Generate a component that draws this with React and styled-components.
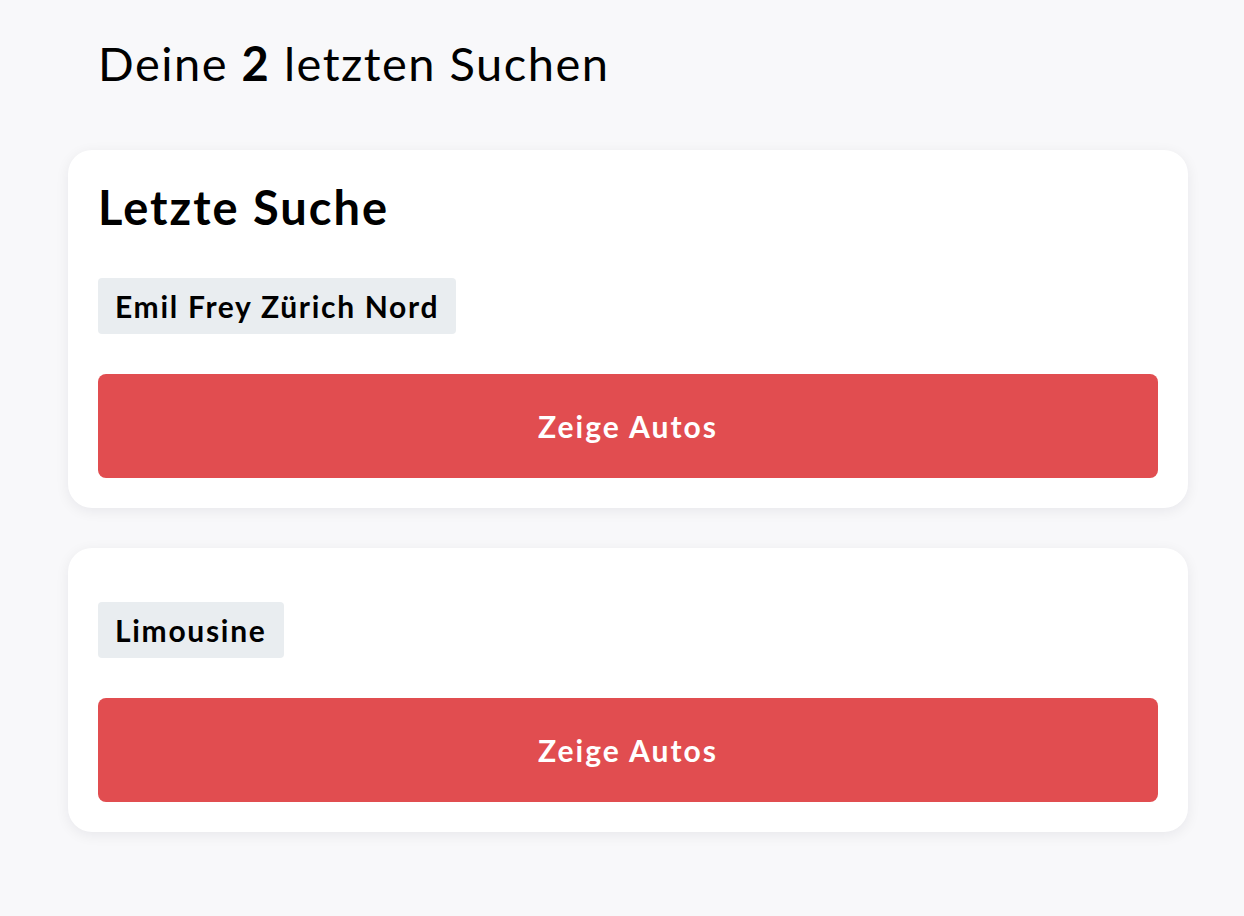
import React from "react";
import styled, { createGlobalStyle } from "styled-components";

const Global = createGlobalStyle`
  html, body {
    margin: 0;
    padding: 0;
    background: #f8f8fa;
    font-family: Lato, "Noto Sans", sans-serif;
    color: #000;
  }
`;

const Page = styled.main`
  padding: 34px 56px 40px 68px;
`;

const Heading = styled.h1`
  margin: 0 0 58px 30px;
  font-size: 47px;
  line-height: 58px;
  font-weight: 400;
  letter-spacing: 1.5px;
  b { font-weight: 700; }
`;

const List = styled.div`
  display: flex;
  flex-direction: column;
  gap: 40px;
`;

const Card = styled.section`
  background: #fff;
  border-radius: 24px;
  box-shadow: 0 3px 14px rgba(20, 20, 40, 0.07);
  padding: ${(p) => (p.$titled ? "30px" : "54px 30px 30px")};
  display: flex;
  flex-direction: column;
  align-items: flex-start;
`;

const CardTitle = styled.h2`
  margin: 0 0 40px;
  font-size: 47px;
  line-height: 54px;
  padding-bottom: 4px;
  font-weight: 700;
  letter-spacing: 2px;
`;

const Tag = styled.span`
  display: inline-flex;
  align-items: center;
  height: 56px;
  padding: 0 17px;
  background: #e9edf0;
  border-radius: 4px;
  font-size: 30px;
  font-weight: 700;
  letter-spacing: 1.7px;
`;

const Button = styled.button`
  margin-top: 40px;
  align-self: stretch;
  height: 104px;
  border: 0;
  border-radius: 8px;
  background: #e14d50;
  color: #fff;
  font-family: inherit;
  font-size: 30px;
  font-weight: 700;
  letter-spacing: 2px;
  cursor: pointer;
`;

const searches = [
  { title: "Letzte Suche", tag: "Emil Frey Zürich Nord" },
  { title: null, tag: "Limousine" },
];

export default function App() {
  return (
    <>
      <Global />
      <Page>
        <Heading>
          Deine <b>2</b> letzten Suchen
        </Heading>
        <List>
          {searches.map((s, i) => (
            <Card key={i} $titled={!!s.title}>
              {s.title && <CardTitle>{s.title}</CardTitle>}
              <Tag>{s.tag}</Tag>
              <Button>Zeige Autos</Button>
            </Card>
          ))}
        </List>
      </Page>
    </>
  );
}
